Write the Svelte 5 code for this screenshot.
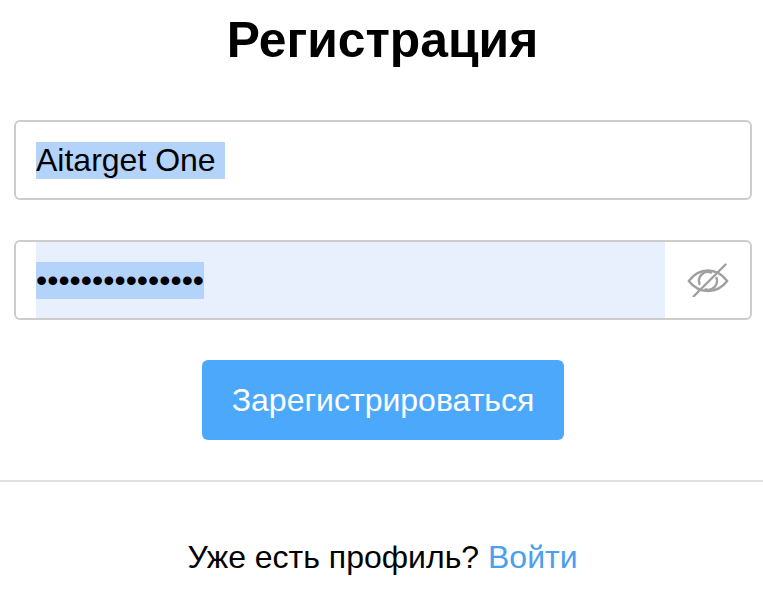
<script>
  let title = 'Регистрация';
</script>

<main class="page">
  <h1>{title}</h1>
  <form class="form">
    <div class="field">
      <div class="value"><span class="sel">Aitarget One&nbsp;</span></div>
    </div>
    <div class="field">
      <div class="value auto"><span class="sel">•••••••••••••••</span></div>
      <div class="eye">
        <svg width="42" height="34" viewBox="0 0 42 34" fill="none" stroke="#a0a0a0" stroke-width="2.4" stroke-linecap="round" stroke-linejoin="round">
          <path d="M1.800 18C7 11 13.500 7.500 21 7.500S35 11 40.200 18C35 24.800 28.500 28 21 28S7 24.800 1.800 18z" />
          <path d="M12.500 21a9 9 0 0 1 11.500-11.500" />
          <path d="M29.500 15a9 9 0 0 1-11 11.500" />
          <path d="M38.500 1.500L6.500 33.500" />
        </svg>
      </div>
    </div>
    <button type="button" class="submit">Зарегистрироваться</button>
  </form>
  <hr class="rule" />
  <p class="foot">Уже есть профиль? <a href="#login">Войти</a></p>
</main>

<style>
  :global(body) {
    margin: 0;
    background: #fff;
  }
  .page {
    width: 763px;
    height: 607px;
    overflow: hidden;
    font-family: "Liberation Sans", Arial, sans-serif;
    color: #000;
    box-sizing: border-box;
  }
  h1 {
    margin: 0;
    height: 120px;
    padding-top: 10px;
    padding-left: 2px;
    box-sizing: border-box;
    font-size: 49.800px;
    line-height: 60px;
    font-weight: 700;
    text-align: center;
  }
  .form {
    display: flex;
    flex-direction: column;
    gap: 40px;
    margin: 0 11px 0 14px;
  }
  .field {
    display: flex;
    height: 80px;
    box-sizing: border-box;
    border: 2px solid #ccc;
    border-radius: 6px;
    padding-left: 20px;
    background: #fff;
  }
  .value {
    flex: 1;
    display: flex;
    align-items: center;
    font-size: 32px;
    line-height: 37px;
    white-space: pre;
  }
  .auto {
    background: #e8f0fe;
  }
  .sel {
    background: #b4d3fb;
  }
  .eye {
    flex: none;
    width: 85px;
    display: flex;
    align-items: center;
    justify-content: center;
  }
  .submit {
    align-self: center;
    width: 362px;
    height: 80px;
    border: 0;
    border-radius: 6px;
    background: #4ca8fb;
    color: #fff;
    font: inherit;
    font-size: 32px;
    padding: 0;
  }
  .rule {
    margin: 40px 0 0;
    border: 0;
    height: 2px;
    background: #e0e0e0;
  }
  .foot {
    margin: 57px 0 0;
    padding-left: 2px;
    font-size: 32px;
    line-height: 37px;
    text-align: center;
  }
  .foot a {
    color: #4a9fee;
    text-decoration: none;
  }
</style>
